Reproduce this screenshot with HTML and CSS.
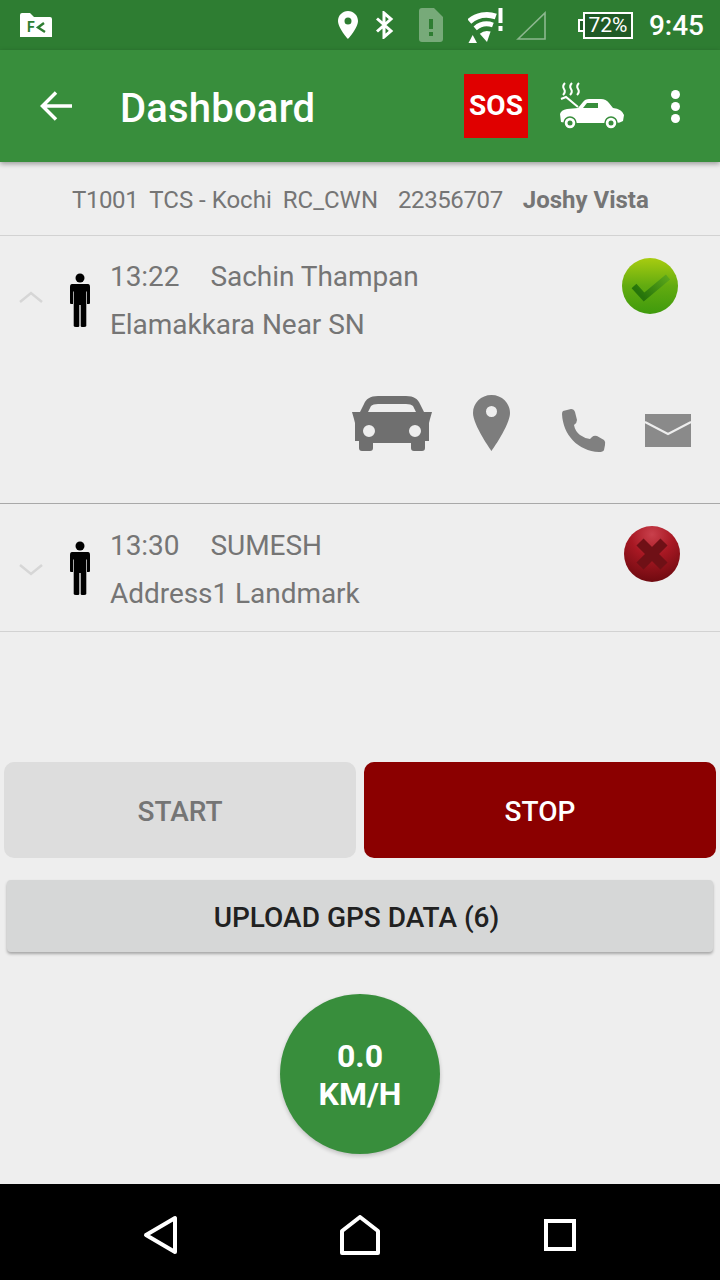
FILE: index.html
```html
<!DOCTYPE html>
<html lang="en">

<head>
    <meta charset="UTF-8">
    <meta name="viewport" content="width=device-width, initial-scale=1.0">
    <title>Dashboard</title>
    <link rel="stylesheet" href="styles.css">
</head>

<body>
    <!-- android status bar -->
    <div class="statusbar">
        <svg class="st-folder" width="32" height="24" viewBox="0 0 32 24">
            <path d="M0 2 Q0 0 2 0 H10 L14 4 H30 Q32 4 32 6 V24 H0 Z" fill="#fff" />
            <text x="7" y="19" class="fk">F</text>
            <path d="M24 10 L18 14.5 L25 19" fill="none" stroke="#2e7d32" stroke-width="2.4" />
        </svg>
        <div class="st-right">
            <svg class="st-pin" width="20" height="28" viewBox="0 0 20 28">
                <path fill-rule="evenodd" d="M10 0 C4.5 0 0 4.4 0 10 C0 17 10 28 10 28 C10 28 20 17 20 10 C20 4.4 15.5 0 10 0 Z M10 6.500 A3.500 3.500 0 1 1 10 13.500 A3.500 3.500 0 1 1 10 6.500 Z" fill="#fff" />
            </svg>
            <svg class="st-bt" width="19" height="28" viewBox="0 0 19 28">
                <path d="M2 7.500 L16 20 L9 26 V2 L16 8 L2 20.500" fill="none" stroke="#fff" stroke-width="3" />
            </svg>
            <svg class="st-sim" width="24" height="34" viewBox="0 0 24 34">
                <path d="M3 0 H15 L24 9 V31 Q24 34 21 34 H3 Q0 34 0 31 V3 Q0 0 3 0 Z" fill="#fff" fill-opacity="0.35" />
                <rect x="10" y="11" width="4" height="10" fill="#2e7d32" />
                <rect x="10" y="24" width="4" height="4" fill="#2e7d32" />
            </svg>
            <svg class="st-wifi" width="36" height="36" viewBox="0 0 36 36">
                <path d="M1.300 14.500 A27 27 0 0 1 27.800 9.500" fill="none" stroke="#fff" stroke-width="6" />
                <path d="M7.200 21.300 A18 18 0 0 1 24.900 18" fill="none" stroke="#fff" stroke-width="5" />
                <path d="M19 35 L11.800 26.700 A11 11 0 0 1 22.600 24.600 Z" fill="#fff" />
                <path d="M0.500 36 L4.700 28 L9 36 Z" fill="#fff" />
                <rect x="30.500" y="1" width="4" height="15" fill="#fff" />
                <rect x="30.500" y="19" width="4" height="5" fill="#fff" />
            </svg>
            <svg class="st-signal" width="30" height="29" viewBox="0 0 30 29">
                <path d="M2 28 L29 2 V28 Z" fill="none" stroke="#fff" stroke-opacity="0.45" stroke-width="1.600" />
            </svg>
            <div class="battery">72%</div>
            <span class="clock">9:45</span>
        </div>
    </div>

    <header class="toolbar">
        <svg class="back" width="32" height="30" viewBox="0 0 32 30">
            <path d="M32 15 H3 M16 1.500 L2.500 15 L16 28.500" fill="none" stroke="#fff" stroke-width="3.500" />
        </svg>
        <h1>Dashboard</h1>
        <div class="sos">SOS</div>
        <svg class="breakdown" width="64" height="48" viewBox="0 0 64 48">
            <path d="M0 32 Q1 28 7 27 L18 26 L23 20 Q25 17 29 17 L41 17 Q46 17 49 21 L53 26 Q62 27 64 33 L63 39 Q60 41 56 41 H16 Q6 41 1 40 Z" fill="#fff" />
            <path d="M23 26 L27 21 H38 V26 Z" fill="#388e3c" />
            <path d="M1 17 L6 15 L18 25" fill="none" stroke="#fff" stroke-width="2" />
            <path d="M5 1 Q2 4 4 7 Q6 10 3 13 M12 1 Q9 4 11 7 Q13 10 10 13 M19 1 Q16 4 18 7 Q20 10 17 13" fill="none" stroke="#fff" stroke-width="2" />
            <circle cx="10" cy="41" r="6" fill="#fff" stroke="#388e3c" stroke-width="1.500" />
            <circle cx="10" cy="41" r="2.500" fill="#388e3c" />
            <circle cx="51" cy="41" r="6" fill="#fff" stroke="#388e3c" stroke-width="1.500" />
            <circle cx="51" cy="41" r="2.500" fill="#388e3c" />
        </svg>
        <div class="overflow">
            <span></span>
            <span></span>
            <span></span>
        </div>
    </header>

    <div class="inforow">
        <div class="route">
            <span class="num">T1001</span>
            <span>TCS - Kochi</span>
            <span>RC_CWN</span>
        </div>
        <span class="num">22356707</span>
        <b>Joshy Vista</b>
    </div>

    <section class="trip trip-open">
        <div class="trip-head">
            <svg class="chevron" width="24" height="12" viewBox="0 0 24 12">
                <path d="M1 11 L12 2 L23 11" fill="none" stroke="#d6d6d6" stroke-width="2.500" />
            </svg>
            <svg class="person" width="22" height="54" viewBox="0 0 22 54">
                <circle cx="11" cy="5" r="4.500" fill="#000" />
                <path d="M3 11 H19 Q21 11 21 14 V30 Q21 31 20 31 H18 V18.500 H17.300 V53 Q17 54 15 54 H13 Q11.700 54 11.700 53 V32 H10.300 V53 Q10.300 54 9 54 H7 Q5 54 4.700 53 V18.500 H4 V31 H2 Q1 31 1 30 V14 Q1 11 3 11 Z" fill="#000" />
            </svg>
            <div class="trip-text">
                <p><span class="time">13:22</span>Sachin Thampan</p>
                <p>Elamakkara Near SN</p>
            </div>
            <svg class="state" width="58" height="58" viewBox="0 0 58 58">
                <defs>
                    <linearGradient id="okball" x1="0" y1="0" x2="0" y2="1">
                        <stop offset="0" stop-color="#a8cc10" />
                        <stop offset="0.5" stop-color="#62ab10" />
                        <stop offset="1" stop-color="#3f9a0d" />
                    </linearGradient>
                    <linearGradient id="oktick" gradientUnits="userSpaceOnUse" x1="47" y1="19" x2="23" y2="41">
                        <stop offset="0" stop-color="#5ca81b" />
                        <stop offset="1" stop-color="#26740a" />
                    </linearGradient>
                </defs>
                <circle cx="29" cy="29" r="28" fill="url(#okball)" />
                <path d="M13 29 L23 40 L47 20" fill="none" stroke="url(#oktick)" stroke-width="6.500" />
            </svg>
        </div>
        <div class="trip-actions">
            <svg width="80" height="57" viewBox="0 0 80 57">
                <path fill-rule="evenodd" d="M26 1 H54 C62 1 66 4 68 9 L72 17 H80 L78 24 L77 28 V46 H73 V53 Q73 56 70 56 H62 Q59 56 59 53 V48 H21 V53 Q21 56 18 56 H10 Q7 56 7 53 V46 H3 V28 L2 24 L0 17 H8 L12 9 C14 4 18 1 26 1 Z M16 17 H64 L61 11 Q59 9 54 9 H26 Q21 9 19 11 Z M17 30 A6 6 0 1 0 17 42 A6 6 0 1 0 17 30 Z M63 30 A6 6 0 1 0 63 42 A6 6 0 1 0 63 30 Z" fill="#6f6f6f" />
            </svg>
            <svg class="act-pin" width="37" height="56" viewBox="0 0 37 56">
                <path fill-rule="evenodd" d="M18.500 0 C8 0 0 8 0 18 C0 30 18.500 56 18.500 56 C18.500 56 37 30 37 18 C37 8 29 0 18.500 0 Z M18.500 11 A5.500 5.500 0 1 1 18.500 22 A5.500 5.500 0 1 1 18.500 11 Z" fill="#7d7d7d" />
            </svg>
            <svg class="act-phone" width="44" height="43" viewBox="0 0 44 43">
                <path d="M1 2 L9 0 Q12 0 13 3 L15 11 Q15 14 12 16 Q13 22 18 26 Q22 29 28 30 L30 28 Q32 26 35 27 L42 31 Q44 33 43 36 L42 41 Q41 43 37 43 C16 42 1 26 0 5 Q0 3 1 2 Z" fill="#808080" />
            </svg>
            <svg class="act-mail" width="46" height="33" viewBox="0 0 46 33">
                <rect width="46" height="33" fill="#8a8a8a" />
                <path d="M0 8 L23 20 L46 8" fill="none" stroke="#eee" stroke-width="2" />
            </svg>
        </div>
    </section>

    <section class="trip trip-closed">
        <div class="trip-head">
            <svg class="chevron" width="24" height="12" viewBox="0 0 24 12">
                <path d="M1 1 L12 10 L23 1" fill="none" stroke="#d6d6d6" stroke-width="2.500" />
            </svg>
            <svg class="person" width="22" height="54" viewBox="0 0 22 54">
                <circle cx="11" cy="5" r="4.500" fill="#000" />
                <path d="M3 11 H19 Q21 11 21 14 V30 Q21 31 20 31 H18 V18.500 H17.300 V53 Q17 54 15 54 H13 Q11.700 54 11.700 53 V32 H10.300 V53 Q10.300 54 9 54 H7 Q5 54 4.700 53 V18.500 H4 V31 H2 Q1 31 1 30 V14 Q1 11 3 11 Z" fill="#000" />
            </svg>
            <div class="trip-text">
                <p><span class="time">13:30</span>SUMESH</p>
                <p>Address1 Landmark</p>
            </div>
            <svg class="state state-bad" width="58" height="58" viewBox="0 0 58 58">
                <defs>
                    <radialGradient id="badball" cx="50%" cy="15%" r="85%">
                        <stop offset="0" stop-color="#c9404c" />
                        <stop offset="0.45" stop-color="#a81823" />
                        <stop offset="1" stop-color="#6f0a10" />
                    </radialGradient>
                </defs>
                <circle cx="29" cy="29" r="28" fill="url(#badball)" />
                <path d="M17 17 L41 41 M41 17 L17 41" stroke="#6f1016" stroke-width="10" />
            </svg>
        </div>
    </section>

    <div class="controls">
        <button class="btn-start">START</button>
        <button class="btn-stop">STOP</button>
    </div>

    <button class="btn-upload">UPLOAD GPS DATA (6)</button>

    <div class="speed">
        <span>0.0</span>
        <span>KM/H</span>
    </div>

    <!-- android nav bar -->
    <footer class="navbar">
        <svg width="36" height="40" viewBox="0 0 36 40">
            <path d="M32 3 V37 L3 20 Z" fill="none" stroke="#fff" stroke-width="4" stroke-linejoin="round" />
        </svg>
        <svg class="nav-home" width="40" height="40" viewBox="0 0 40 40">
            <path d="M2 38 V16 L20 2 L38 16 V38 Z" fill="none" stroke="#fff" stroke-width="4" stroke-linejoin="round" />
        </svg>
        <svg class="nav-recent" width="32" height="32" viewBox="0 0 32 32">
            <rect x="2" y="2" width="28" height="28" fill="none" stroke="#fff" stroke-width="4" />
        </svg>
    </footer>
</body>

</html>
```

FILE: styles.css
```css
body {
    margin: 0;
    height: 1280px;
    overflow: hidden;
    display: flex;
    flex-direction: column;
    background-color: #eeeeee;
    font-family: Roboto, sans-serif;
    color: #757575;
}

svg {
    display: block;
    flex: none;
}

/* status bar */
.statusbar {
    height: 50px;
    flex: none;
    display: flex;
    align-items: center;
    padding: 0 16px 0 20px;
    background-color: #2e7d32;
}

.fk {
    font-family: Roboto, sans-serif;
    font-weight: 700;
    font-size: 14px;
    fill: #2e7d32;
}

.st-right {
    margin-left: auto;
    display: flex;
    align-items: center;
    color: #fff;
}

.st-bt {
    margin-left: 17px;
}

.st-sim {
    margin-left: 25px;
}

.st-wifi {
    margin-left: 25px;
}

.st-signal {
    margin-left: 12px;
}

.battery {
    position: relative;
    margin-left: 37px;
    width: 46px;
    height: 23px;
    border: 2px solid #fff;
    background-color: #1f5a25;
    font-size: 21px;
    line-height: 23px;
    text-align: center;
}

.battery::before {
    content: "";
    position: absolute;
    left: -7px;
    top: 5px;
    width: 5px;
    height: 13px;
    background-color: #1f5a25;
    border: 2px solid #fff;
    border-right: none;
    box-sizing: border-box;
}

.clock {
    margin-left: 16px;
    font-size: 28px;
    font-weight: 500;
}

/* toolbar */
.toolbar {
    position: relative;
    z-index: 1;
    height: 112px;
    flex: none;
    display: flex;
    align-items: center;
    padding-left: 40px;
    background-color: #388e3c;
    box-shadow: 0 2px 5px rgba(0, 0, 0, 0.35);
}

.toolbar h1 {
    margin: 4px 0 0 48px;
    font-size: 40px;
    font-weight: 500;
    letter-spacing: 0.2px;
    color: #fff;
}

.sos {
    width: 64px;
    height: 64px;
    margin-left: auto;
    background-color: #e00000;
    color: #fff;
    font-size: 28px;
    font-weight: 700;
    line-height: 64px;
    text-align: center;
}

.breakdown {
    margin-left: 32px;
}

.overflow {
    display: flex;
    flex-direction: column;
    gap: 3px;
    margin: 0 40px 0 47px;
}

.overflow span {
    width: 9px;
    height: 9px;
    border-radius: 50%;
    background-color: #fff;
}

/* info line */
.inforow {
    height: 71px;
    flex: none;
    display: flex;
    align-items: center;
    gap: 20px;
    padding: 2px 0 0 72px;
    font-size: 24px;
    border-bottom: 1px solid #d2d2d2;
}

.route {
    display: flex;
    gap: 11px;
}

.num {
    letter-spacing: -0.4px;
}

.inforow b {
    font-weight: 700;
}

/* trips */
.trip {
    flex: none;
    border-bottom: 1px solid #d2d2d2;
    padding: 16px 0 15px;
}

.trip-open {
    border-bottom-color: #a8a8a8;
    padding-bottom: 0;
    height: 251px;
}

.trip-head {
    display: flex;
    align-items: center;
    height: 96px;
}

.chevron {
    margin-left: 19px;
}

.trip-open .chevron {
    margin-bottom: 6px;
}

.trip-closed .chevron {
    margin-top: 4px;
}

.person {
    margin-left: 26px;
}

.trip-text {
    margin-left: 19px;
    margin-top: 2px;
    font-size: 28px;
    line-height: 48px;
}

.trip-closed .trip-text {
    margin-top: 4px;
}

.trip-text p {
    margin: 0;
    letter-spacing: -0.05px;
}

.time {
    display: inline-block;
    margin-right: 31px;
}

.state {
    margin-left: auto;
    margin-right: 41px;
    align-self: flex-start;
    margin-top: 5px;
}

.state-bad {
    margin-right: 39px;
}

.trip-actions {
    display: flex;
    align-items: flex-end;
    justify-content: flex-end;
    height: 57px;
    margin-top: 47px;
    padding-right: 29px;
}

.act-pin {
    margin-left: 41px;
    margin-bottom: 1px;
}

.act-phone {
    margin-left: 52px;
}

.act-mail {
    margin-left: 39px;
    margin-bottom: 5px;
}

/* buttons */
button {
    border: none;
    padding: 2px 0 0;
    font-family: Roboto, sans-serif;
    font-size: 28px;
    font-weight: 500;
}

.controls {
    display: flex;
    gap: 8px;
    padding: 0 4px;
    margin-top: 130px;
}

.controls button {
    flex: 1;
    height: 96px;
    border-radius: 10px;
}

.btn-start {
    background-color: #dddddd;
    color: #757575;
}

.btn-stop {
    background-color: #8b0000;
    color: #fff;
}

.btn-upload {
    flex: none;
    height: 72px;
    margin: 22px 7px 0;
    padding-right: 7px;
    border-radius: 4px;
    background-color: #d6d7d7;
    color: #212121;
    box-shadow: 0 2px 3px rgba(0, 0, 0, 0.3);
}

.speed {
    width: 160px;
    height: 158px;
    padding-top: 2px;
    flex: none;
    margin: 42px auto 0;
    border-radius: 50%;
    display: flex;
    flex-direction: column;
    align-items: center;
    justify-content: center;
    background-color: #388e3c;
    color: #fff;
    font-size: 32px;
    font-weight: 700;
    line-height: 38px;
    box-shadow: 0 2px 4px rgba(0, 0, 0, 0.2);
}

/* nav bar */
.navbar {
    height: 90px;
    flex: none;
    margin-top: auto;
    display: flex;
    align-items: center;
    padding: 6px 0 0 143px;
    background-color: #000;
}

.nav-home {
    margin-left: 161px;
}

.nav-recent {
    margin-left: 164px;
}
```
